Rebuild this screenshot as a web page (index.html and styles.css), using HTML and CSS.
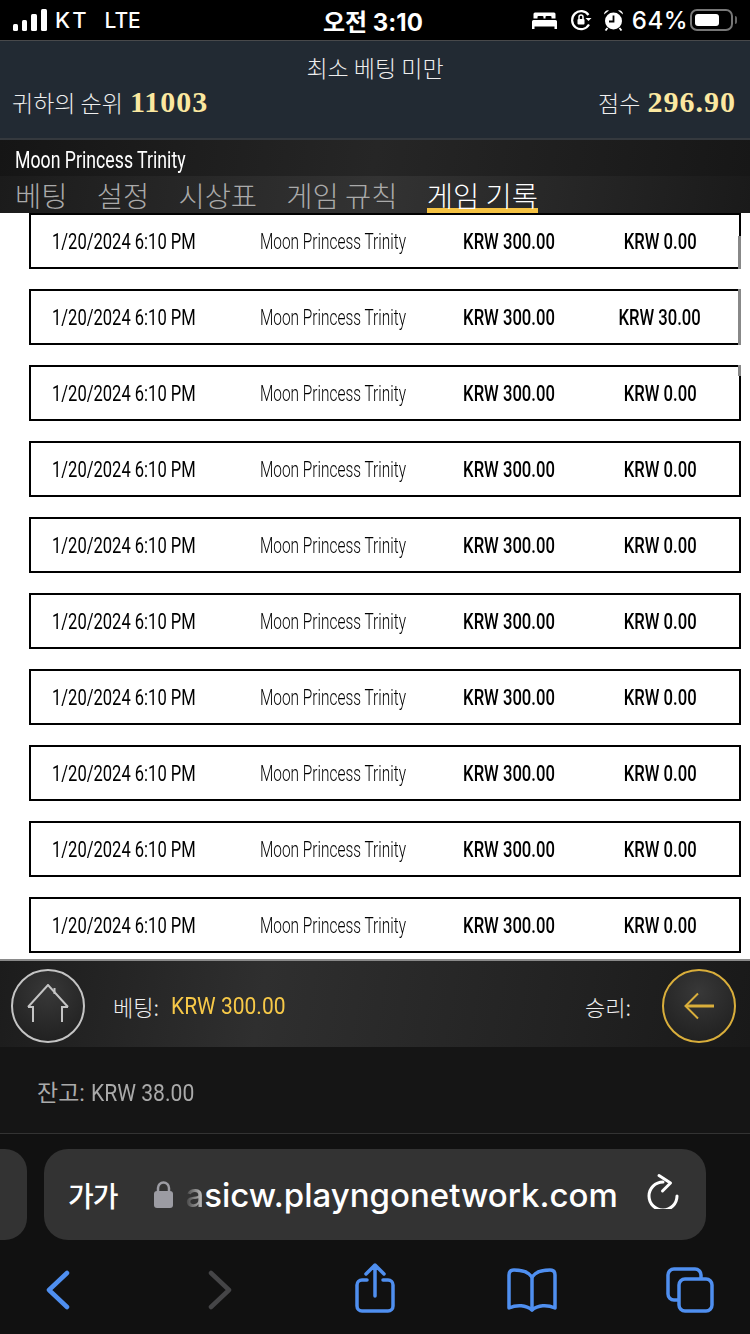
FILE: index.html
```html
<!DOCTYPE html>
<html>

<head>
    <title>Moon Princess Trinity</title>
    <link rel="stylesheet" href="styles.css">
</head>

<body>
    <div class="status-bar">
        <div class="status-left">
            <svg class="signal" width="34" height="22" viewBox="0 0 34 22" fill="#fff">
                <rect x="0" y="15" width="5" height="7" rx="1.5" />
                <rect x="9" y="11" width="5" height="11" rx="1.5" />
                <rect x="18" y="5" width="6" height="17" rx="1.5" />
                <rect x="28" y="0" width="6" height="22" rx="1.5" />
            </svg>
            <span class="carrier">KT</span>
            <span class="carrier carrier-lte">LTE</span>
        </div>
        <div class="clock">오전 3:10</div>
        <div class="status-right">
            <svg width="25" height="18" viewBox="0 0 25 18" fill="#fff">
                <path d="M3 1.500h19a1.500 1.500 0 0 1 1.500 1.500v4.500h-4v-1.500a1 1 0 0 0-1-1h-4a1 1 0 0 0-1 1v1.500h-2v-1.500a1 1 0 0 0-1-1h-4a1 1 0 0 0-1 1v1.500h-4V3A1.500 1.500 0 0 1 3 1.500z" />
                <path d="M1.500 9h22a1.500 1.500 0 0 1 1.500 1.500V18h-2.500v-2.500h-20V18H0v-7.500A1.500 1.500 0 0 1 1.500 9z" />
            </svg>
            <svg class="rotation" width="22" height="22" viewBox="0 0 22 22" fill="none" stroke="#fff" stroke-width="2.200">
                <path d="M19 15.500A9 9 0 1 1 18.500 6" />
                <path d="M21.500 9l-3 3-3-3z" fill="#fff" stroke="none" />
                <rect x="7.500" y="10" width="7" height="5.500" rx="1" fill="#fff" stroke="none" />
                <path d="M9 10V8a2 2 0 0 1 4 0v2" stroke-width="1.500" />
            </svg>
            <svg class="alarm" width="21" height="22" viewBox="0 0 21 22">
                <circle cx="10.500" cy="12" r="8.500" fill="#fff" />
                <path d="M10.500 6.500V12.500H6" fill="none" stroke="#000" stroke-width="1.800" />
                <path d="M1 5.500A4 4 0 0 1 6 1.500zM20 5.500A4 4 0 0 0 15 1.500z" fill="#fff" />
                <path d="M4.500 19l-2 2.500M16.500 19l2 2.500" stroke="#fff" stroke-width="1.800" />
            </svg>
            <span class="battery-text">64%</span>
            <div class="battery">
                <div class="battery-fill"></div>
            </div>
            <div class="battery-nub"></div>
        </div>
    </div>

    <div class="score-panel">
        <div class="score-note">최소 베팅 미만</div>
        <div class="score-row">
            <div>귀하의 순위 <span class="score-value">11003</span></div>
            <div>점수 <span class="score-value">296.90</span></div>
        </div>
    </div>

    <div class="game-title"><span class="squeeze-title">Moon Princess Trinity</span></div>

    <div class="tabs">
        <span class="tab">베팅</span>
        <span class="tab">설정</span>
        <span class="tab">시상표</span>
        <span class="tab">게임 규칙</span>
        <span class="tab active">게임 기록</span>
    </div>

    <div class="history">
        <div class="history-row"><span class="date">1/20/2024 6:10 PM</span><span class="game">Moon Princess Trinity</span><span class="money"><span>KRW 300.00</span></span><span class="money"><span>KRW 0.00</span></span><i class="thumb thumb-first"></i></div>
        <div class="history-row"><span class="date">1/20/2024 6:10 PM</span><span class="game">Moon Princess Trinity</span><span class="money"><span>KRW 300.00</span></span><span class="money"><span>KRW 30.00</span></span><i class="thumb"></i></div>
        <div class="history-row"><span class="date">1/20/2024 6:10 PM</span><span class="game">Moon Princess Trinity</span><span class="money"><span>KRW 300.00</span></span><span class="money"><span>KRW 0.00</span></span><i class="thumb thumb-last"></i></div>
        <div class="history-row"><span class="date">1/20/2024 6:10 PM</span><span class="game">Moon Princess Trinity</span><span class="money"><span>KRW 300.00</span></span><span class="money"><span>KRW 0.00</span></span></div>
        <div class="history-row"><span class="date">1/20/2024 6:10 PM</span><span class="game">Moon Princess Trinity</span><span class="money"><span>KRW 300.00</span></span><span class="money"><span>KRW 0.00</span></span></div>
        <div class="history-row"><span class="date">1/20/2024 6:10 PM</span><span class="game">Moon Princess Trinity</span><span class="money"><span>KRW 300.00</span></span><span class="money"><span>KRW 0.00</span></span></div>
        <div class="history-row"><span class="date">1/20/2024 6:10 PM</span><span class="game">Moon Princess Trinity</span><span class="money"><span>KRW 300.00</span></span><span class="money"><span>KRW 0.00</span></span></div>
        <div class="history-row"><span class="date">1/20/2024 6:10 PM</span><span class="game">Moon Princess Trinity</span><span class="money"><span>KRW 300.00</span></span><span class="money"><span>KRW 0.00</span></span></div>
        <div class="history-row"><span class="date">1/20/2024 6:10 PM</span><span class="game">Moon Princess Trinity</span><span class="money"><span>KRW 300.00</span></span><span class="money"><span>KRW 0.00</span></span></div>
        <div class="history-row"><span class="date">1/20/2024 6:10 PM</span><span class="game">Moon Princess Trinity</span><span class="money"><span>KRW 300.00</span></span><span class="money"><span>KRW 0.00</span></span></div>
    </div>

    <div class="bet-bar">
        <div class="round-btn home-btn">
            <svg width="42" height="38" viewBox="0 0 42 38" fill="none" stroke="#c4c4c4" stroke-width="2">
                <path d="M1 23 21 1l20 22" />
                <path d="M1 23h5v15M41 23h-6v15M27.500 4v6" />
            </svg>
        </div>
        <div class="bet-label">베팅:</div>
        <div class="bet-value"><span class="squeeze-amount">KRW 300.00</span></div>
        <div class="win-label">승리:</div>
        <div class="round-btn back-btn">
            <svg width="32" height="28" viewBox="0 0 32 28" fill="none" stroke="#d9ae3b">
                <path d="M15 1.500 2.500 14 15 26.500" stroke-width="2" />
                <path d="M3 14h28" stroke-width="3" />
            </svg>
        </div>
    </div>

    <div class="balance">잔고: <span class="squeeze-balance">KRW 38.00</span></div>

    <div class="browser">
        <div class="url-row">
            <div class="prev-pill"></div>
            <div class="url-pill">
                <span class="reader">가가</span>
                <svg class="lock" width="19" height="27" viewBox="0 0 19 27">
                    <rect x="0" y="10" width="19" height="17" rx="3" fill="#9c9ca3" />
                    <path d="M4 11V7a5.500 5.500 0 0 1 11 0v4" fill="none" stroke="#9c9ca3" stroke-width="2.500" />
                </svg>
                <span class="url"><span class="url-fade">a</span>sicw.playngonetwork.com</span>
                <svg class="reload" width="32" height="36" viewBox="0 0 32 36" fill="none" stroke="#fff" stroke-width="3" stroke-linecap="round" stroke-linejoin="round">
                    <path d="M16 9A14 14 0 1 0 30 23" />
                    <path d="M12 2.500l11.500 7.500-8 8" />
                </svg>
            </div>
        </div>
        <div class="nav-row">
            <svg class="nav-back" width="24" height="40" viewBox="0 0 24 40" fill="none" stroke="#4f8ff0" stroke-width="4.500" stroke-linecap="round" stroke-linejoin="round">
                <path d="M21 3 3 20l18 17" />
            </svg>
            <svg class="nav-forward" width="24" height="40" viewBox="0 0 24 40" fill="none" stroke="#454547" stroke-width="4.500" stroke-linecap="round" stroke-linejoin="round">
                <path d="M3 3l18 17L3 37" />
            </svg>
            <svg class="nav-share" width="40" height="50" viewBox="0 0 40 50" fill="none" stroke="#4f8ff0" stroke-width="3.500" stroke-linecap="round" stroke-linejoin="round">
                <path d="M12 17H7a5 5 0 0 0-5 5v21a5 5 0 0 0 5 5h26a5 5 0 0 0 5-5V22a5 5 0 0 0-5-5h-5" />
                <path d="M20 33V3M11 11l9-9 9 9" />
            </svg>
            <svg class="nav-book" width="50" height="44" viewBox="0 0 50 44" fill="none" stroke="#4f8ff0" stroke-width="3.500" stroke-linecap="round" stroke-linejoin="round">
                <path d="M25 9C21 3 14 2 7 2 3.500 2 2 4 2 7v33c8-3.500 17-3 23 2 6-5 15-5.500 23-2V7c0-3-1.500-5-5-5-7 0-14 1-18 7z" />
                <path d="M25 9v33" />
            </svg>
            <svg class="nav-tabs" width="48" height="46" viewBox="0 0 48 46" fill="none" stroke="#4f8ff0" stroke-width="3.500" stroke-linejoin="round">
                <rect x="13" y="12" width="33" height="32" rx="6" />
                <path d="M13 33H8a6 6 0 0 1-6-6V8a6 6 0 0 1 6-6h21a6 6 0 0 1 6 6v4" />
            </svg>
        </div>
    </div>
</body>

</html>
```

FILE: styles.css
```css
* {
    box-sizing: border-box;
}

body {
    font-family: Roboto, "Noto Sans CJK KR", sans-serif;
    margin: 0;
    width: 750px;
    height: 1334px;
    overflow: hidden;
    display: flex;
    flex-direction: column;
    background-color: #111;
}

.status-bar {
    height: 40px;
    flex: none;
    display: flex;
    align-items: center;
    justify-content: space-between;
    position: relative;
    padding: 0 13px;
    background-color: #000;
    color: #fff;
    font-family: Inter, "Noto Sans CJK KR", sans-serif;
    font-weight: 500;
    font-size: 22px;
}

.status-left {
    display: flex;
    align-items: center;
}

.signal {
    margin-right: 8px;
}

.carrier {
    letter-spacing: 2px;
    margin-right: 16px;
}

.carrier-lte {
    letter-spacing: 0;
    font-size: 21px;
}

.clock {
    position: absolute;
    left: 323px;
    top: 3px;
    font-size: 24px;
    font-weight: 700;
}

.status-right {
    display: flex;
    align-items: center;
}

.rotation {
    margin-left: 13px;
}

.alarm {
    margin-left: 11px;
}

.battery-text {
    margin-left: 8px;
    font-size: 24px;
    letter-spacing: 0.5px;
}

.battery {
    width: 43px;
    height: 22px;
    margin-left: 2px;
    padding: 3px;
    border: 2px solid #777;
    border-radius: 7px;
}

.battery-fill {
    width: 24px;
    height: 100%;
    background-color: #fff;
    border-radius: 3px;
}

.battery-nub {
    width: 2px;
    height: 8px;
    margin-left: 2px;
    background-color: #666;
    border-radius: 0 2px 2px 0;
}

.score-panel {
    height: 100px;
    flex: none;
    padding-top: 10px;
    background-color: #222a33;
    border-top: 1px solid #48494b;
    border-bottom: 2px solid #35393e;
    color: #eee;
    font-size: 23px;
    font-family: "Noto Sans CJK KR", sans-serif;
    font-weight: 300;
}

.score-note {
    text-align: center;
    line-height: 32px;
}

.score-row {
    display: flex;
    justify-content: space-between;
    padding: 0 14px 0 12px;
    line-height: 38px;
}

.score-value {
    margin-left: 2px;
    font-family: "Liberation Serif", serif;
    font-weight: 700;
    font-size: 30px;
    letter-spacing: 1px;
    color: #fbe8a0;
}

.game-title {
    height: 36px;
    flex: none;
    padding-left: 15px;
    line-height: 41px;
    background: linear-gradient(100deg, #151515, #262626 50%, #171717);
    color: #fff;
    font-size: 23px;
}

.squeeze-title {
    display: inline-block;
    white-space: nowrap;
    transform: scaleX(0.77);
    transform-origin: left;
}

.tabs {
    height: 37px;
    flex: none;
    display: flex;
    gap: 29.250px;
    padding-left: 15px;
    background: linear-gradient(100deg, #1b1b1b, #333 50%, #1a1a1a);
    font-family: "Noto Sans CJK KR", sans-serif;
    font-weight: 300;
    font-size: 28.500px;
    line-height: 38px;
    color: #aaa;
}

.tab {
    height: 37px;
}

.tab.active {
    color: #fff;
    border-bottom: 5px solid #f5c242;
}

.history {
    height: 746px;
    flex: none;
    display: flex;
    flex-direction: column;
    gap: 20px;
    padding: 0 9px 0 29px;
    overflow: hidden;
    background-color: #fff;
    color: #000;
    font-size: 22.500px;
}

.history-row {
    height: 56px;
    flex: none;
    display: grid;
    grid-template-columns: 208px 173px 152px 150px;
    align-items: center;
    position: relative;
    padding-left: 21px;
    border: 2px solid #000;
    white-space: nowrap;
}

.date,
.game {
    transform-origin: left;
}

.date {
    transform: scaleX(0.735);
}

.game {
    font-weight: 300;
    transform: scaleX(0.685);
}

.money {
    font-weight: 500;
    text-align: center;
}

.money span {
    display: inline-block;
    transform: scaleX(0.74);
}

.thumb {
    position: absolute;
    top: -2px;
    bottom: -2px;
    right: -2px;
    width: 3px;
    background-color: #888;
}

.thumb-first {
    top: 21px;
}

.thumb-last {
    bottom: 43px;
}

.bet-bar {
    height: 88px;
    flex: none;
    display: flex;
    align-items: center;
    padding: 3px 14px 0 11px;
    border-top: 2px solid #8a8a8a;
    background: linear-gradient(100deg, #1c1c1c, #2f2f2f 35%, #222 75%, #191919);
    color: #eee;
    font-size: 22px;
}

.round-btn {
    width: 74px;
    height: 74px;
    flex: none;
    display: flex;
    align-items: center;
    justify-content: center;
    border-radius: 50%;
    border: 2px solid #c4c4c4;
    background: radial-gradient(circle at 50% 30%, #383838, #1c1c1c);
}

.home-btn svg {
    margin-bottom: 6px;
}

.back-btn {
    border-color: #d9ae3b;
}

.bet-label {
    margin-left: 28px;
    font-family: "Noto Sans CJK KR", sans-serif;
    font-weight: 300;
}

.bet-value {
    margin-left: 12px;
    font-size: 24px;
    color: #f7c948;
}

.squeeze-amount {
    display: inline-block;
    transform: scaleX(0.875);
    transform-origin: left;
}

.win-label {
    margin-left: auto;
    margin-right: 31px;
    font-family: "Noto Sans CJK KR", sans-serif;
    font-weight: 300;
}

.balance {
    height: 87px;
    flex: none;
    padding: 27px 0 0 37px;
    border-bottom: 1px solid #333;
    background-color: #151515;
    color: #aaa;
    font-size: 23px;
}

.squeeze-balance {
    display: inline-block;
    font-size: 24px;
    transform: scaleX(0.88);
    transform-origin: left;
}

.browser {
    flex: 1;
    padding-top: 15px;
    background-color: #111;
}

.url-row {
    display: flex;
    gap: 17px;
}

.prev-pill {
    width: 27px;
    height: 91px;
    background-color: #333;
    border-radius: 0 22px 22px 0;
}

.url-pill {
    width: 662px;
    height: 91px;
    display: flex;
    align-items: center;
    padding-left: 24px;
    background-color: #333;
    border-radius: 24px;
    color: #fff;
    font-family: Inter, "Noto Sans CJK KR", sans-serif;
}

.reader {
    font-size: 28px;
    font-weight: 500;
    letter-spacing: -1px;
}

.lock {
    margin-left: 36px;
}

.url {
    margin-left: 13px;
    font-size: 33px;
    font-weight: 500;
    white-space: nowrap;
}

.url-fade {
    background: linear-gradient(90deg, #444, #ccc);
    -webkit-background-clip: text;
    background-clip: text;
    color: transparent;
}

.reload {
    margin: 0 0 8px 29px;
}

.nav-row {
    position: relative;
    height: 90px;
}

.nav-row svg {
    position: absolute;
}

.nav-back {
    left: 46px;
    top: 30px;
}

.nav-forward {
    left: 208px;
    top: 30px;
}

.nav-share {
    left: 355px;
    top: 23px;
}

.nav-book {
    left: 507px;
    top: 28px;
}

.nav-tabs {
    left: 666px;
    top: 27px;
}
```
